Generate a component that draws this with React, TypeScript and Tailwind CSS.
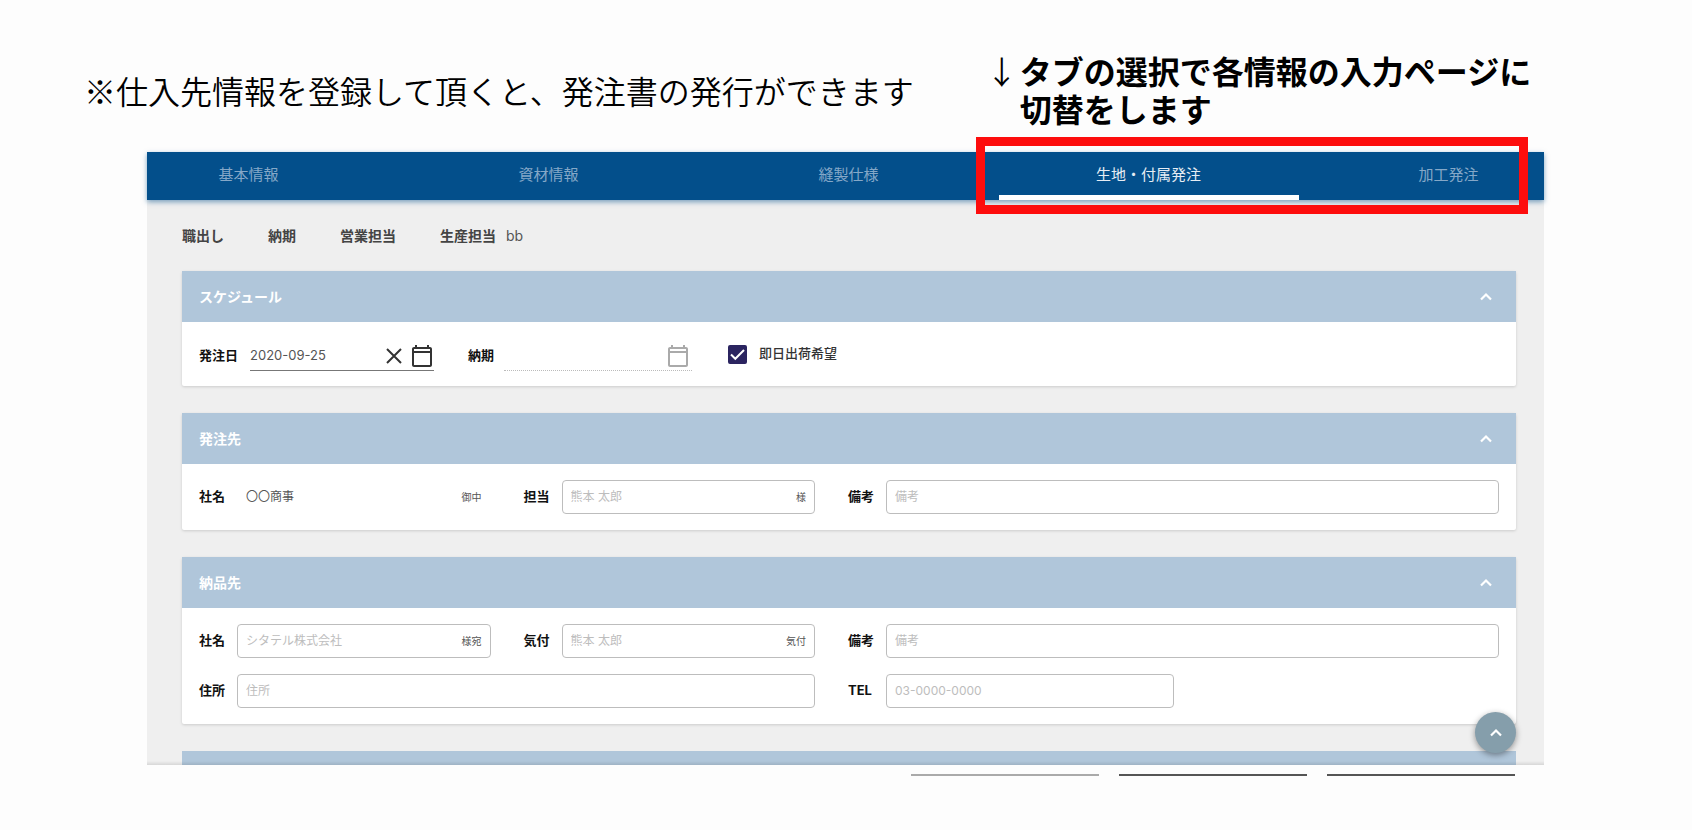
import React from 'react';

const tabs = ['基本情報', '資材情報', '縫製仕様', '生地・付属発注', '加工発注'];

function Chevron() {
  return (
    <svg viewBox="0 0 24 24" className="size-5" fill="none" stroke="currentColor" strokeWidth="2.600" aria-hidden="true">
      <path d="M6 15l6-6 6 6" />
    </svg>
  );
}

function CalendarIcon() {
  return (
    <svg viewBox="0 0 24 24" className="size-6" fill="currentColor" aria-hidden="true">
      <path d="M20 3h-1V1h-2v2H7V1H5v2H4c-1.1 0-2 .9-2 2v16c0 1.1.9 2 2 2h16c1.1 0 2-.9 2-2V5c0-1.1-.9-2-2-2zm0 18H4V9h16V21zm0-14H4V5h16v2z" />
    </svg>
  );
}

function CloseIcon() {
  return (
    <svg viewBox="0 0 24 24" className="size-6" fill="none" stroke="currentColor" strokeWidth="2" aria-hidden="true">
      <path d="M5 5l14 14M19 5L5 19" />
    </svg>
  );
}

function Section({ title, children }: { title: string; children: React.ReactNode }) {
  return (
    <section className="rounded-xs bg-white shadow-[0_1px_3px_rgba(0,0,0,0.15)]">
      <button
        type="button"
        className="flex h-[51px] w-full items-center justify-between bg-[#b0c6da] pl-[17px] pr-5 text-sm font-bold text-white"
      >
        {title}
        <Chevron />
      </button>
      {children}
    </section>
  );
}

type FieldProps = {
  id: string;
  label: string;
  placeholder?: string;
  value?: string;
  suffix?: string;
  plain?: boolean;
  className?: string;
  boxClass?: string;
};

function Field({ id, label, placeholder, value, suffix, plain, className = '', boxClass = 'flex-1' }: FieldProps) {
  return (
    <div className={`flex min-w-0 items-center gap-3 ${className}`}>
      <label htmlFor={id} className="w-[26px] shrink-0 text-[13px] font-bold text-[#111]">
        {label}
      </label>
      <div
        className={`flex h-[34px] min-w-0 items-center rounded border px-2 ${
          plain ? 'border-transparent' : 'border-[#bdbdbd]'
        } ${boxClass}`}
      >
        <input
          id={id}
          type="text"
          defaultValue={value}
          placeholder={placeholder}
          className="min-w-0 flex-1 bg-transparent text-xs text-[#555] outline-none placeholder:text-[#bdbdbd]"
        />
        {suffix && <span className="text-[10px] text-[#555]">{suffix}</span>}
      </div>
    </div>
  );
}

export default function App() {
  return (
    <div className="min-h-screen bg-[#fdfdfd] font-[Inter,'Noto_Sans_CJK_JP',sans-serif] text-[#444]">
      <header className="flex h-[152px] gap-[72px] overflow-hidden whitespace-nowrap pl-[84px] pt-[51px] text-[32px] leading-[38px] text-black font-['Noto_Sans_CJK_JP',sans-serif]">
        <p className="pt-5 font-[350]">※仕入先情報を登録して頂くと、発注書の発行ができます</p>
        <div className="flex gap-[2px]">
          <span className="font-[350]">↓</span>
          <p className="font-bold">
            タブの選択で各情報の入力ページに
            <br />
            切替をします
          </p>
        </div>
      </header>

      <main className="pl-[147px] pr-[148px]">
        <div className="relative bg-[#efefef]">
          <div className="relative z-10">
            <nav className="overflow-hidden bg-[#034f8b] pl-[6px] shadow-[0_2px_5px_rgba(3,79,139,0.5)]">
              <div className="flex justify-center">
                {tabs.map((t) => {
                  const active = t === '生地・付属発注';
                  return (
                    <button
                      key={t}
                      type="button"
                      className={`h-12 w-[300px] shrink-0 border-b-[5px] pt-[3px] text-[15px] ${
                        active ? 'border-white text-[#e6edf4]' : 'border-transparent text-[#85a8c8]'
                      }`}
                    >
                      {t}
                    </button>
                  );
                })}
              </div>
            </nav>
            <div className="pointer-events-none absolute -top-[15px] right-4 h-[77px] w-[552px] border-[9px] border-[#fd0d0d]" />
          </div>

          <div className="pl-[35px] pr-7">
            <div className="flex h-[71px] items-center gap-11 text-sm font-bold text-[#444]">
              <span>職出し</span>
              <span>納期</span>
              <span>営業担当</span>
              <span>
                生産担当<span className="ml-[10px] font-normal text-[#555]">bb</span>
              </span>
            </div>

            <div className="flex flex-col gap-[27px]">
              <Section title="スケジュール">
                <div className="flex h-16 items-center px-[17px] pt-1">
                  <label htmlFor="order-date" className="text-[13px] font-bold text-[#111]">
                    発注日
                  </label>
                  <div className="ml-3 flex h-[30px] w-[184px] items-center border-b border-[#777]">
                    <input
                      id="order-date"
                      type="text"
                      defaultValue="2020-09-25"
                      className="min-w-0 flex-1 bg-transparent text-[13px] text-[#555] outline-none"
                    />
                    <button type="button" aria-label="クリア" className="mr-1 text-[#333]">
                      <CloseIcon />
                    </button>
                    <button type="button" aria-label="カレンダー" className="text-[#333]">
                      <CalendarIcon />
                    </button>
                  </div>
                  <label htmlFor="due-date" className="ml-[34px] text-[13px] font-bold text-[#111]">
                    納期
                  </label>
                  <div className="ml-[10px] flex h-[30px] w-[188px] items-center border-b border-dotted border-[#bbb]">
                    <input
                      id="due-date"
                      type="text"
                      disabled
                      className="min-w-0 flex-1 bg-transparent text-[13px] outline-none"
                    />
                    <button type="button" disabled aria-label="カレンダー" className="mr-[2px] text-[#aaa]">
                      <CalendarIcon />
                    </button>
                  </div>
                  <label className="ml-9 flex items-center gap-3 pb-1 text-[13px] font-medium text-[#333]">
                    <span className="relative flex size-[19px]">
                      <input
                        type="checkbox"
                        defaultChecked
                        className="size-[19px] appearance-none rounded-xs border-2 border-[#2b2460] checked:bg-[#2b2460]"
                      />
                      <svg
                        viewBox="0 0 19 19"
                        className="pointer-events-none absolute inset-0"
                        fill="none"
                        stroke="white"
                        strokeWidth="2"
                        aria-hidden="true"
                      >
                        <path d="M3 9.500l4.300 4.300L16 5" />
                      </svg>
                    </span>
                    即日出荷希望
                  </label>
                </div>
              </Section>

              <Section title="発注先">
                <div className="grid grid-cols-[73fr_73fr_163fr] gap-x-[33px] gap-y-4 px-[17px] py-4">
                  <Field id="supplier" label="社名" value="〇〇商事" suffix="御中" plain />
                  <Field id="supplier-person" label="担当" placeholder="熊本 太郎" suffix="様" />
                  <Field id="supplier-note" label="備考" placeholder="備考" />
                </div>
              </Section>

              <Section title="納品先">
                <div className="grid grid-cols-[73fr_73fr_163fr] gap-x-[33px] gap-y-4 px-[17px] py-4">
                  <Field id="dest" label="社名" placeholder="シタテル株式会社" suffix="様宛" />
                  <Field id="dest-person" label="気付" placeholder="熊本 太郎" suffix="気付" />
                  <Field id="dest-note" label="備考" placeholder="備考" />
                  <Field id="dest-address" label="住所" placeholder="住所" className="col-span-2" />
                  <Field id="dest-tel" label="TEL" placeholder="03-0000-0000" boxClass="w-[288px]" />
                </div>
              </Section>

              <div className="h-[14px] bg-[#b0c6da]" />
            </div>
          </div>

          <div className="pointer-events-none absolute inset-x-0 bottom-0 h-1 bg-linear-to-b from-transparent to-black/10" />
          <button
            type="button"
            aria-label="ページの先頭へ"
            className="absolute bottom-3 right-7 flex size-[41px] items-center justify-center rounded-full bg-[#859eab] text-white shadow-[0_2px_6px_rgba(0,0,0,0.4)]"
          >
            <Chevron />
          </button>
        </div>

        <div className="flex justify-end gap-5 pr-[29px] pt-[9px]">
          <div className="h-[2px] w-[188px] bg-[#aaa]" />
          <div className="h-[2px] w-[188px] bg-[#555]" />
          <div className="h-[2px] w-[188px] bg-[#555]" />
        </div>
      </main>
    </div>
  );
}
